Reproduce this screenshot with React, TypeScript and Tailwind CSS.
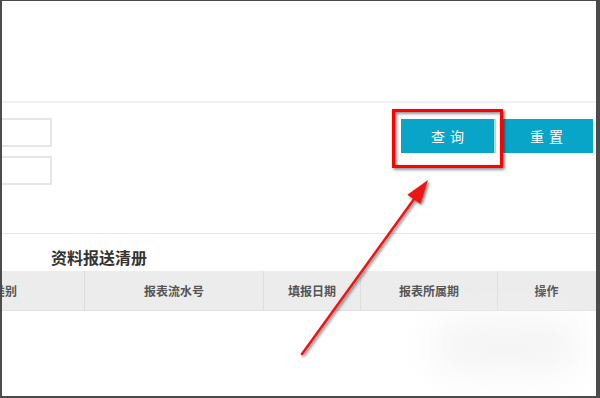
import React from 'react';

const font = { fontFamily: '"Noto Sans CJK SC", "Microsoft YaHei", sans-serif' };

const columns = [
  { label: '类别', width: 'w-[158px]' },
  { label: '报表流水号', width: 'w-[179px]' },
  { label: '填报日期', width: 'w-[97px]' },
  { label: '报表所属期', width: 'w-[137px]' },
  { label: '操作', width: 'w-[98px]' },
];

const Annotation: React.FC = () => (
  <svg className="absolute inset-0 pointer-events-none" width={600} height={398}>
    <defs>
      <filter id="shadow" x="-20%" y="-20%" width="140%" height="140%">
        <feDropShadow dx="1.5" dy="1.5" stdDeviation="1.5" floodColor="#000" floodOpacity="0.55" />
      </filter>
    </defs>
    <rect x={393.5} y={110.5} width={108} height={56} fill="none" stroke="#f00" strokeWidth={3} filter="url(#shadow)" />
    <g filter="url(#shadow)">
      <line x1={302} y1={354} x2={417} y2={195} stroke="#ec1515" strokeWidth={2.5} strokeLinecap="round" />
      <polygon points="428,180 420.4,204.1 407.4,194.7" fill="#ec1515" />
    </g>
  </svg>
);

export default function App() {
  return (
    <div className="relative w-[600px] h-[398px] overflow-hidden bg-[#4b4b4b] pt-[1px] pl-[2px] pr-[4px] pb-[2px]" style={font}>
      <div className="relative flex flex-col h-full bg-white overflow-hidden">
        <div className="h-[100px] shrink-0" />
        <div className="h-[2px] shrink-0 bg-[#f1f1f1]" />

        <div className="h-[130px] shrink-0 flex justify-between">
          <div className="flex flex-col gap-[9px] pt-[15px]">
            <div className="w-[60px] h-[29px] ml-[-10px] border-2 border-[#e6e6e6] bg-white" />
            <div className="w-[60px] h-[29px] ml-[-10px] border-2 border-[#e6e6e6] bg-white" />
          </div>
          <div className="flex gap-[4px] pt-[16px] pr-[3px]">
            <button className="w-[95px] h-[34px] bg-[#09a5c9] text-white text-[14px] tracking-[5px] pl-[5px] border-r-2 border-[#a9dbe8]">
              查询
            </button>
            <button className="w-[93px] h-[34px] bg-[#09a5c9] text-white text-[14px] tracking-[5px] pl-[5px]">
              重置
            </button>
          </div>
        </div>

        <div className="h-px shrink-0 bg-[#e6e6e6]" />

        <div className="mt-[11px] pl-[49px] text-[16px] leading-[24px] font-bold text-[#333]">资料报送清册</div>

        <div className="mt-[2px] ml-[-76px] flex h-[40px] bg-[#ececec] border-b border-[#e2e2e2]">
          {columns.map((c, i) => (
            <div
              key={c.label}
              className={`${c.width} flex items-center justify-center text-[12px] font-semibold text-[#555] ${i > 0 ? 'border-l border-[#dedede]' : ''}`}
            >
              {c.label}
            </div>
          ))}
        </div>

        <div className="absolute left-[430px] top-[320px] w-[150px] h-[50px] rounded-full bg-[#f4f4f4] blur-[18px]" />
      </div>
      <Annotation />
    </div>
  );
}
